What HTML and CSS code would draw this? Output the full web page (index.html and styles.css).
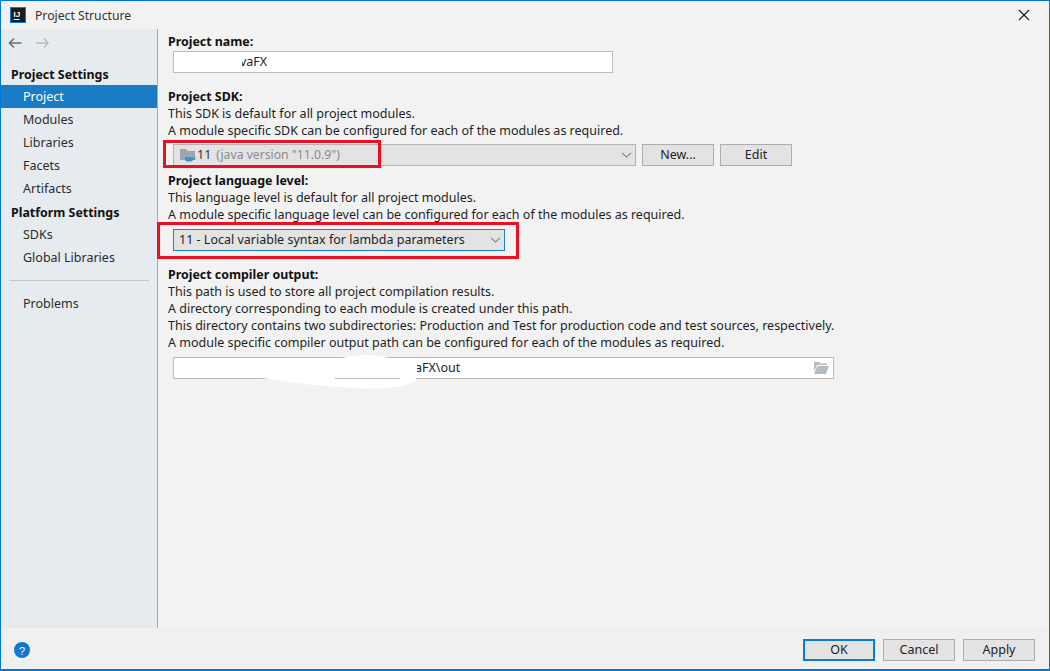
FILE: index.html
```html
<!DOCTYPE html>
<html lang="en">
<head>
<meta charset="utf-8">
<title>Project Structure</title>
<link rel="stylesheet" href="styles.css">
</head>
<body>
<div class="window">
  <header class="titlebar">
    <svg class="app-icon" width="16" height="16" viewBox="0 0 16 16"><rect width="16" height="16" fill="#0a7bd6"/><rect x="1" y="1" width="14" height="14" fill="#1b1b1b"/><rect x="3.500" y="12" width="6" height="1" fill="#fff"/><text x="3.500" y="9.500" class="app-icon-text">IJ</text></svg>
    <span class="title">Project Structure</span>
    <svg class="close" width="12" height="12" viewBox="0 0 12 12"><path d="M1 1l10 10M11 1L1 11" stroke="#222" stroke-width="1.200" fill="none"/></svg>
  </header>
  <div class="main">
    <nav class="sidebar">
      <div class="history">
        <svg width="14" height="12" viewBox="0 0 14 12"><path d="M13.500 6H1.500M6 1.500L1.500 6L6 10.500" stroke="#6e6e6e" stroke-width="1.600" fill="none"/></svg>
        <svg width="14" height="12" viewBox="0 0 14 12"><path d="M1 6h12M9 1.500L13 6l-4 4.500" stroke="#b9bdc1" stroke-width="1.600" fill="none"/></svg>
      </div>
      <div class="nav-head">Project Settings</div>
      <div class="nav-item selected">Project</div>
      <div class="nav-item">Modules</div>
      <div class="nav-item">Libraries</div>
      <div class="nav-item">Facets</div>
      <div class="nav-item">Artifacts</div>
      <div class="nav-head">Platform Settings</div>
      <div class="nav-item">SDKs</div>
      <div class="nav-item">Global Libraries</div>
      <div class="nav-sep"></div>
      <div class="nav-item">Problems</div>
    </nav>
    <section class="content">
      <div class="label">Project name:</div>
      <div class="field name-field"><span class="field-text name-text">vaFX</span></div>
      <div class="label sdk-label">Project SDK:</div>
      <p class="desc">This SDK is default for all project modules.</p>
      <p class="desc">A module specific SDK can be configured for each of the modules as required.</p>
      <div class="sdk-row">
        <div class="combo sdk-combo">
          <svg class="sdk-icon" width="16" height="16" viewBox="0 0 16 16"><path d="M0 2h6l2 2h7v9H0z" fill="#9aa7b0"/><path d="M5 10h8v2.500a2 2 0 0 1-2 2H7a2 2 0 0 1-2-2z" fill="#3a97d3"/><path d="M13 10.500h2v2h-2" fill="none" stroke="#3a97d3"/></svg>
          <span class="sdk-name">11</span><span class="sdk-version">(java version "11.0.9")</span>
          <svg class="chevron" width="11" height="6" viewBox="0 0 11 6"><path d="M1 1l4.500 4L10 1" stroke="#8a8a8a" stroke-width="1.100" fill="none"/></svg>
        </div>
        <div class="btn">New...</div>
        <div class="btn">Edit</div>
      </div>
      <div class="label lang-label">Project language level:</div>
      <p class="desc">This language level is default for all project modules.</p>
      <p class="desc">A module specific language level can be configured for each of the modules as required.</p>
      <div class="combo lang-combo">
        <span>11 - Local variable syntax for lambda parameters</span>
        <svg class="chevron" width="11" height="6" viewBox="0 0 11 6"><path d="M1 1l4.500 4L10 1" stroke="#8a8a8a" stroke-width="1.100" fill="none"/></svg>
      </div>
      <div class="label output-label">Project compiler output:</div>
      <p class="desc">This path is used to store all project compilation results.</p>
      <p class="desc">A directory corresponding to each module is created under this path.</p>
      <p class="desc">This directory contains two subdirectories: Production and Test for production code and test sources, respectively.</p>
      <p class="desc">A module specific compiler output path can be configured for each of the modules as required.</p>
      <div class="field output-field">
        <span class="field-text output-text">aFX\out</span>
        <svg class="folder" width="16" height="13" viewBox="0 0 16 13"><path d="M1 1h5l1.500 1.500H14V4H4L1 11z" fill="#b5bcc2"/><path d="M4.500 5H16l-3 8H1z" fill="#b5bcc2"/></svg>
      </div>
    </section>
  </div>
  <footer class="footer">
    <svg class="help" width="16" height="16" viewBox="0 0 16 16"><circle cx="8" cy="8" r="8" fill="#0e78d5"/><text x="8" y="12.500" class="help-text">?</text></svg>
    <div class="btn default">OK</div>
    <div class="btn">Cancel</div>
    <div class="btn">Apply</div>
  </footer>
  <div class="mark mark-sdk"></div>
  <div class="mark mark-lang"></div>
  <svg class="scribble" width="160" height="40" viewBox="0 0 160 40"><path d="M3 26H75V12C85 5 105 4 118 6C135 8 150 14 156 18V30C150 37 125 40 95 38C60 36 30 33 3 28z" fill="#fff"/><path d="M75 28.500H140" stroke="#bdbdbd" fill="none"/></svg>
</div>
</body>
</html>
```
FILE: styles.css
```css
* { box-sizing: border-box; }
html, body { margin: 0; padding: 0; }
body { width: 1050px; height: 671px; overflow: hidden; background: #fff; font-family: "Noto Sans", "Open Sans", sans-serif; font-size: 12.500px; color: #1f1f1f; }
.window { position: relative; width: 1050px; height: 671px; display: flex; flex-direction: column; background: #f2f2f2; border: 1px solid #0078d7; border-width: 1px 1px 2px 1px; }
.titlebar { height: 28px; flex: none; display: flex; align-items: center; padding: 0 0 0 9px; background: #f2f2f2; }
.app-icon { flex: none; }
.app-icon-text { font-family: "Liberation Sans", sans-serif; font-weight: 700; font-size: 8px; fill: #fff; }
.title { margin-left: 9px; font-size: 12.200px; color: #333; }
.close { margin-left: auto; margin-right: 19px; }
.main { height: 599px; flex: none; display: flex; }
.sidebar { width: 157px; flex: none; background: #e6ebf0; border-right: 1px solid #a8a8a8; }
.history { height: 28px; display: flex; align-items: center; gap: 13px; padding: 0 0 0 7px; }
.nav-head { height: 22px; margin-top: 6px; padding-left: 10px; line-height: 24px; font-size: 12.400px; font-weight: 700; color: #111; }
.nav-item + .nav-head { margin-top: 1px; }
.nav-item { height: 23px; padding-left: 22px; line-height: 24px; color: #2b2b2b; }
.nav-item.selected { background: #1a7cc4; color: #fff; }
.nav-sep { height: 1px; margin: 11px 8px; background: #c4c6c8; }
.content { flex: 1; padding: 4px 0 0 10px; }
.label { height: 17px; line-height: 17px; font-size: 12.400px; font-weight: 700; color: #111; }
.desc { margin: 0; height: 17px; line-height: 18px; color: #1f1f1f; white-space: nowrap; }
.field { display: flex; align-items: center; margin-left: 5px; padding-bottom: 1px; background: #fff; border: 1px solid #bdbdbd; }
.field-text { color: #222; clip-path: inset(0 0 0 2px); }
.name-field { width: 440px; height: 22px; margin-top: 1px; }
.name-text { margin-left: 66px; }
.sdk-label { margin-top: 15px; }
.sdk-row { display: flex; gap: 6px; margin: 5px 0 0 5px; }
.combo { display: flex; align-items: center; height: 22px; padding-bottom: 1px; background: #e3e3e3; border: 1px solid #b4b4b4; }
.sdk-combo { width: 463px; padding-left: 6px; }
.sdk-icon { flex: none; }
.sdk-name { margin-left: 1px; color: #333; }
.sdk-version { margin-left: 5px; font-size: 12.200px; color: #8c8c8c; }
.chevron { margin-left: auto; margin-right: 3px; flex: none; }
.btn { width: 72px; height: 22px; padding-bottom: 1px; display: flex; align-items: center; justify-content: center; background: #e3e3e3; border: 1px solid #adadad; color: #222; }
.lang-label { margin-top: 6px; }
.lang-combo { width: 332px; margin: 6px 0 0 5px; padding-left: 5px; border-color: #1a80d0; }
.output-label { margin-top: 15px; }
.output-field { width: 661px; height: 22px; margin-top: 6px; padding-right: 4px; }
.output-text { margin-left: 241px; }
.folder { margin-left: auto; }
.footer { flex: 1; display: flex; align-items: center; justify-content: flex-end; gap: 8px; padding: 3px 14px 0 13px; background: #f0f0f0; }
.help { margin-right: auto; }
.help-text { font-family: "Liberation Sans", sans-serif; font-size: 11px; fill: #fff; text-anchor: middle; }
.btn.default { border: 2px solid #0a7bd6; }
.mark { position: absolute; border: 3px solid #e81123; }
.mark-sdk { left: 162px; top: 139px; width: 218px; height: 28px; }
.mark-lang { left: 156px; top: 221px; width: 362px; height: 37px; }
.scribble { position: absolute; left: 259px; top: 349px; }
```
